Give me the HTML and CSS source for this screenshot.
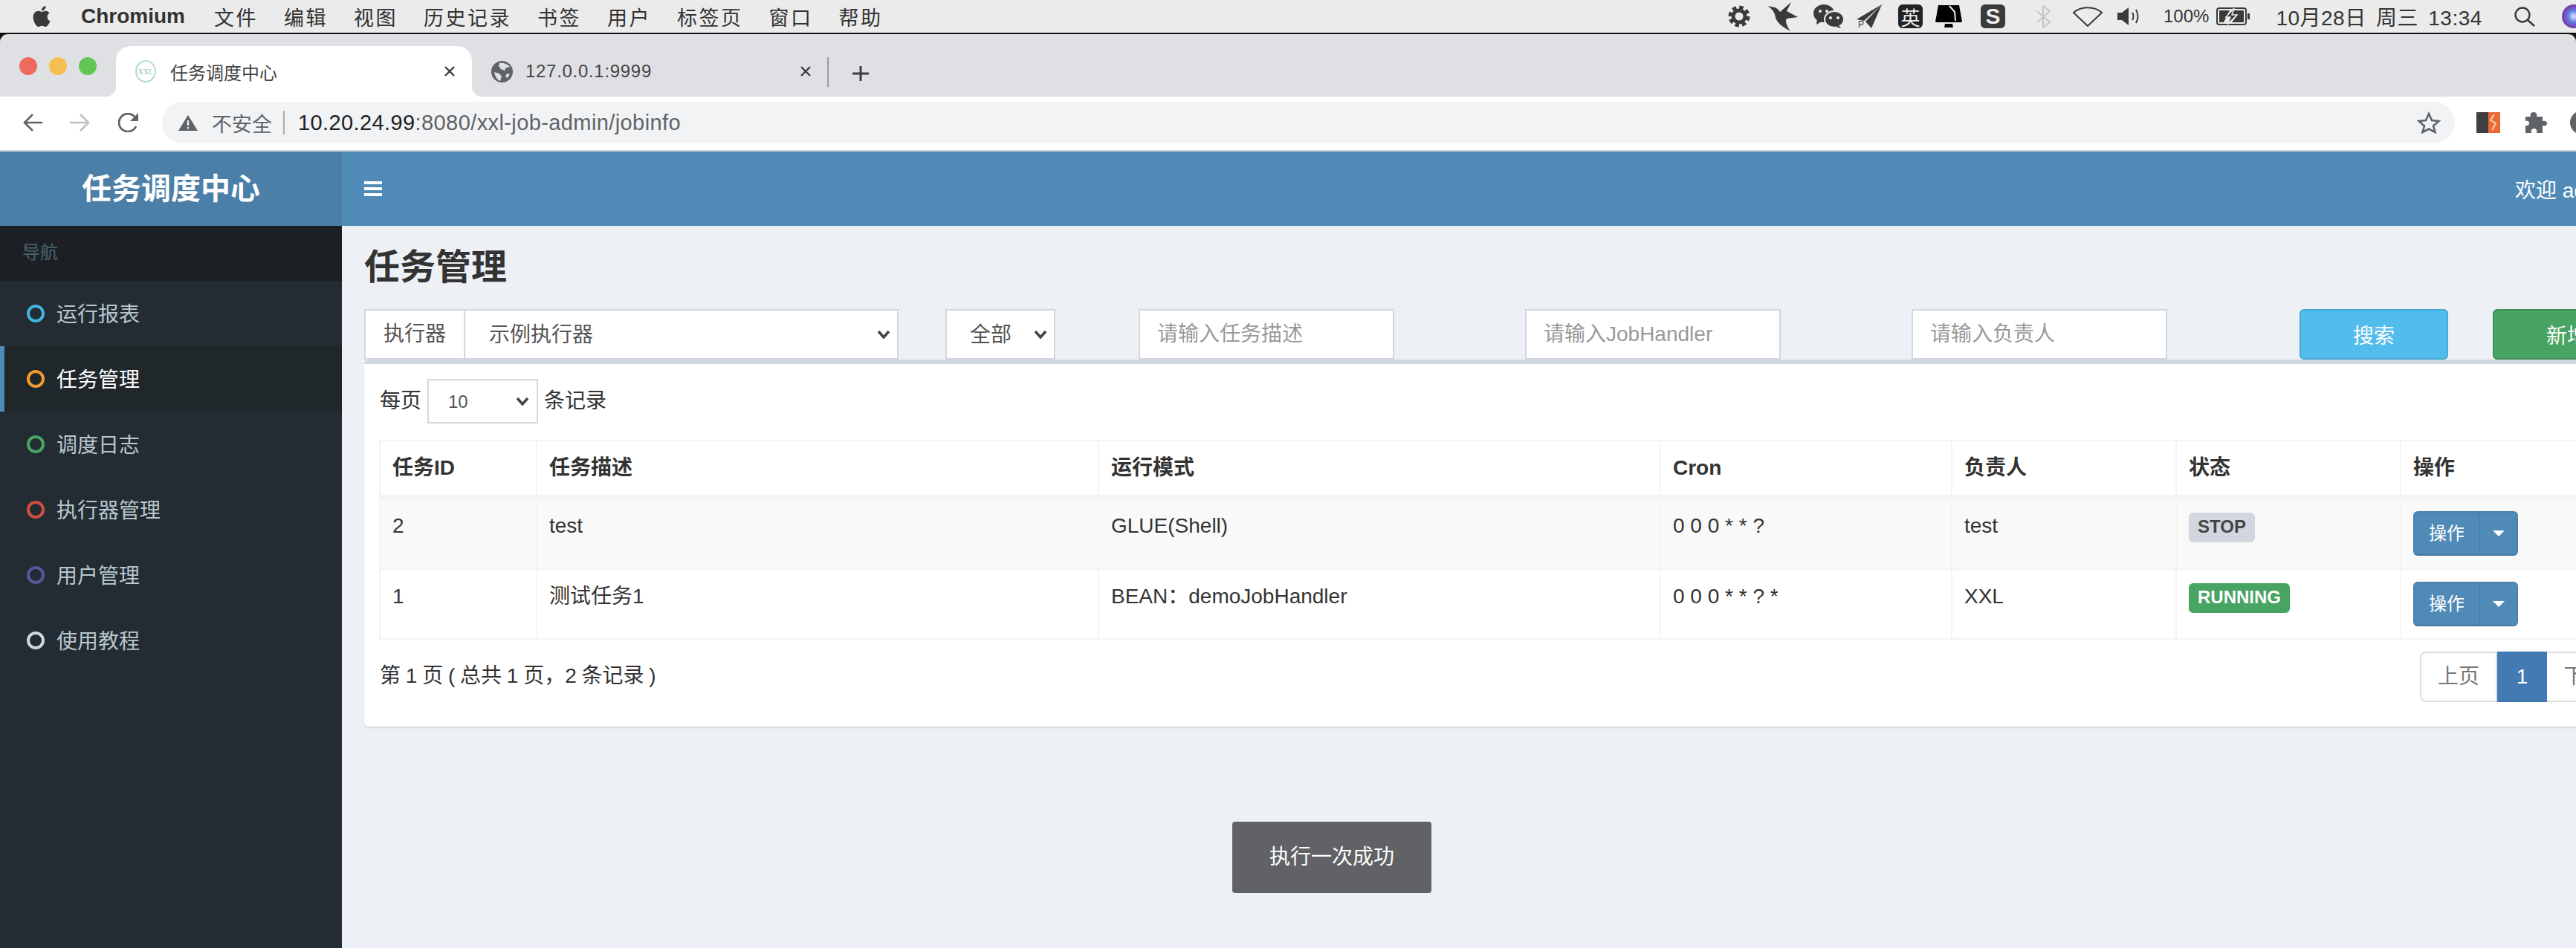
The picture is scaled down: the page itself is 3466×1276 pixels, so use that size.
FILE: index.html
```html
<!DOCTYPE html>
<html lang="zh-CN">
<head>
  <meta charset="UTF-8">
  <title>任务调度中心</title>
  <link rel="stylesheet" href="styles.css">
</head>
<body>
  <div class="menubar">
    <svg class="apple" viewBox="0 0 24 24"><path fill="#3a3a3a" d="M12.152 6.896c-.948 0-2.415-1.078-3.96-1.04-2.04.027-3.91 1.183-4.961 3.014-2.117 3.675-.546 9.103 1.519 12.09 1.013 1.454 2.208 3.09 3.792 3.039 1.52-.065 2.09-.987 3.935-.987 1.831 0 2.35.987 3.96.948 1.637-.026 2.676-1.48 3.676-2.948 1.156-1.688 1.636-3.325 1.662-3.415-.039-.013-3.182-1.221-3.22-4.857-.026-3.04 2.48-4.494 2.597-4.559-1.429-2.09-3.623-2.324-4.39-2.376-2-.156-3.675 1.09-4.61 1.09zM15.53 3.83c.843-1.012 1.4-2.427 1.245-3.83-1.207.052-2.662.805-3.532 1.818-.78.896-1.454 2.338-1.273 3.714 1.338.104 2.715-.688 3.559-1.701"/></svg>
    <b class="app-name">Chromium</b>
    <span>文件</span><span>编辑</span><span>视图</span><span>历史记录</span><span>书签</span><span>用户</span><span>标签页</span><span>窗口</span><span>帮助</span>

    <div class="status">
      <svg class="st-gear" width="30" height="30" viewBox="0 0 30 30"><circle cx="15" cy="15" r="8" fill="none" stroke="#3a3a3a" stroke-width="5"/><circle cx="15" cy="15" r="12" fill="none" stroke="#3a3a3a" stroke-width="5" stroke-dasharray="5.4 4"/></svg>
      <svg class="st-bird" width="43" height="40" viewBox="0 0 43 40"><path fill="#3a3a3a" d="M0 6 L10 8 C13 9 15 11 17 14 L32 1 L26 13 L41 21 L26 23 C24 25 25 32 31 40 C22 35 14 30 11 22 C10 15 7 10 0 6Z"/></svg>
      <svg class="st-wechat" width="41" height="32" viewBox="0 0 41 32"><ellipse cx="14" cy="12" rx="14" ry="12" fill="#3a3a3a"/><path fill="#3a3a3a" d="M5 19 L4 27 L13 22Z"/><ellipse cx="28" cy="20" rx="13" ry="11" fill="#3a3a3a" stroke="#ebebeb" stroke-width="2"/><path fill="#3a3a3a" d="M34 28 L37 32 L30 30Z"/><circle cx="9" cy="9" r="2" fill="#ebebeb"/><circle cx="18" cy="9" r="2" fill="#ebebeb"/><circle cx="23" cy="18" r="2" fill="#ebebeb"/><circle cx="33" cy="18" r="2" fill="#ebebeb"/></svg>
      <svg class="st-plane" width="34" height="32" viewBox="0 0 34 32"><path fill="#3a3a3a" d="M34 0 L0 20 L10 22 Z M34 0 L12 23 L20 32 Z"/><text x="2" y="31" class="plane-p">P</text></svg>
      <span class="st-box st-en">英</span>
      <svg class="st-cup" width="36" height="30" viewBox="0 0 36 30"><path fill="#000" d="M4 0 H32 L36 22 Q36 23 34 23 H2 Q0 23 0 22Z M13 25 H23 L24 30 H12Z"/><path fill="none" stroke="#ebebeb" stroke-width="2" d="M19 1 L26 9 L27 21"/></svg>
      <span class="st-box st-s">S</span>
      <svg class="st-bt" width="19" height="31" viewBox="0 0 19 31"><path fill="none" stroke="#c6c6c6" stroke-width="2" d="M1 8 L18 23 L9 30 V1 L18 8 L1 23"/></svg>
      <svg class="st-wifi" width="42" height="27" viewBox="0 0 42 27"><path fill="none" stroke="#3a3a3a" stroke-width="2" d="M21 26 L2 8 C12 -1 30 -1 40 8Z"/></svg>
      <svg class="st-vol" width="34" height="24" viewBox="0 0 34 24"><path fill="#3a3a3a" d="M0 7 H6 L15 0 V24 L6 17 H0Z"/><path fill="none" stroke="#3a3a3a" stroke-width="2" d="M20 7 Q23 12 20 17 M25 3 Q30 12 25 21"/></svg>
      <span class="st-pct">100%</span>
      <svg class="st-bat" width="45" height="24" viewBox="0 0 45 24"><rect x="1" y="1" width="39" height="22" rx="3" fill="none" stroke="#3a3a3a" stroke-width="2"/><rect x="42" y="8" width="3" height="8" fill="#3a3a3a"/><path fill="#3a3a3a" d="M4 4 H18 L10 20 H4Z M24 4 H37 V20 H21 L28 11 H21Z"/><path fill="#3a3a3a" stroke="#ebebeb" stroke-width="1.5" d="M24 1 L13 13 H19 L15 23 L28 10 H21 Z"/></svg>
      <span class="st-date">10月28日 周三 13:34</span>
      <svg class="st-search" width="30" height="27" viewBox="0 0 30 27"><circle cx="12" cy="11" r="9.5" fill="none" stroke="#3a3a3a" stroke-width="2.4"/><path stroke="#3a3a3a" stroke-width="2.6" d="M19 18 L28 26"/></svg>
      <span class="st-siri"></span>
    </div>
  </div>

  <div class="tabstrip">
    <div class="lights"><i class="red"></i><i class="amber"></i><i class="green"></i></div>
    <div class="tab tab-active">
      <svg class="favicon" width="28" height="30" viewBox="0 0 28 30"><ellipse cx="14" cy="15" rx="13" ry="14" fill="none" stroke="#a3d6bb" stroke-width="1.6"/><text x="14" y="19" class="favicon-text">XXL</text></svg>
      <span class="tab-title">任务调度中心</span>
      <svg class="tab-x" width="16" height="14" viewBox="0 0 16 14"><path stroke="#3d3d3d" stroke-width="2.4" d="M2 1 L14 13 M14 1 L2 13"/></svg>
    </div>
    <div class="tab">
      <svg class="favicon" width="29" height="29" viewBox="0 0 29 29"><circle cx="14.5" cy="14.5" r="14.5" fill="#5f6368"/><path fill="#dfe0e4" d="M11 3 C16 2 22 4 25 8 L20 9 L18 13 L13 11 L10 7Z M4 15 L11 17 L14 21 L12 27 C8 25 5 21 4 15Z M21 17 L25 18 L22 23 L19 21Z"/></svg>
      <span class="tab-title tab-title-ip">127.0.0.1:9999</span>
      <svg class="tab-x" width="16" height="14" viewBox="0 0 16 14"><path stroke="#3d3d3d" stroke-width="2.4" d="M2 1 L14 13 M14 1 L2 13"/></svg>
    </div>
    <span class="tab-sep"></span>
    <svg class="tab-plus" width="22" height="20" viewBox="0 0 22 20"><path stroke="#3d3d3d" stroke-width="3" d="M0 10 H22 M11 0 V20"/></svg>
  </div>

  <div class="toolbar">
    <svg class="tb-back" width="26" height="24" viewBox="0 0 26 24"><path fill="none" stroke="#5f6368" stroke-width="2.6" d="M26 12 H2 M13 1 L2 12 L13 23"/></svg>
    <svg class="tb-forward" width="27" height="24" viewBox="0 0 27 24"><path fill="none" stroke="#bdc0c4" stroke-width="2.6" d="M0 12 H25 M14 1 L25 12 L14 23"/></svg>
    <svg class="tb-reload" width="28" height="26" viewBox="0 0 28 26"><path fill="none" stroke="#5f6368" stroke-width="2.8" d="M24 18 A12 12 0 1 1 22 5"/><path fill="#5f6368" d="M27 0 V11 H16Z"/></svg>
    <div class="addressbar">
      <svg class="warn" width="26" height="21" viewBox="0 0 26 21"><path fill="#5f6368" d="M13 0 L26 21 H0Z"/><path stroke="#f1f3f4" stroke-width="2.4" d="M13 7 V14 M13 16 V18.5"/></svg>
      <span class="insecure">不安全</span>
      <span class="addr-sep"></span>
      <span class="url"><b>10.20.24.99</b>:8080/xxl-job-admin/jobinfo</span>
      <svg class="star" width="32" height="30" viewBox="0 0 32 30"><path fill="none" stroke="#5f6368" stroke-width="2.6" d="M16 3 L20 12 L29.500 13 L22 19.500 L24.500 28 L16 23.500 L7.500 28 L10 19.500 L2.500 13 L12 12Z"/></svg>
    </div>
    <svg class="tb-ext" width="32" height="28" viewBox="0 0 32 28"><rect width="16" height="28" fill="#3f3f41"/><rect x="16" width="16" height="28" fill="#ea6a35"/><path fill="none" stroke="#f7d3c1" stroke-width="2" d="M24 3 L19 11 L26 15 L21 24"/></svg>
    <svg class="tb-puzzle" width="29" height="28" viewBox="0 0 29 28"><path fill="#5f6368" d="M11 0 C15 0 16 3 15 6 H23 V12 C27 11 29 13 29 15 C29 18 26 19 23 18 V28 H15 C16 24 14 22 12 22 C9 22 7 24 8 28 H0 V18 C3 19 5 17 5 15 C5 12 3 11 0 12 V6 H7 C6 3 7 0 11 0Z"/></svg>
    <span class="tb-avatar"></span>
  </div>

  <div class="app">
    <aside class="sidebar">
      <div class="logo">任务调度中心</div>
      <div class="nav-header">导航</div>
      <a class="nav-item"><i class="ring ring-aqua"></i><span>运行报表</span></a>
      <a class="nav-item nav-active"><i class="ring ring-orange"></i><span>任务管理</span></a>
      <a class="nav-item"><i class="ring ring-green"></i><span>调度日志</span></a>
      <a class="nav-item"><i class="ring ring-red"></i><span>执行器管理</span></a>
      <a class="nav-item"><i class="ring ring-purple"></i><span>用户管理</span></a>
      <a class="nav-item"><i class="ring ring-gray"></i><span>使用教程</span></a>
    </aside>

    <main class="page">
      <header class="navbar">
        <div class="burger"><i></i><i></i><i></i></div>
        <span class="welcome">欢迎 admin</span>
      </header>

      <h1 class="page-title">任务管理</h1>

      <div class="filters">
        <div class="input-group">
          <span class="addon">执行器</span>
          <select class="field field-group"><option>示例执行器</option></select>
        </div>
        <select class="field field-status"><option>全部</option></select>
        <input class="field field-text field-first" placeholder="请输入任务描述">
        <input class="field field-text field-next" placeholder="请输入JobHandler">
        <input class="field field-text field-next" placeholder="请输入负责人">
        <button class="btn btn-search">搜索</button>
        <button class="btn btn-add">新增</button>
      </div>

      <section class="box">
        <div class="page-size">
          <span>每页</span>
          <select class="field-size"><option>10</option></select>
          <span>条记录</span>
        </div>

        <table class="jobs">
          <colgroup>
            <col class="c-id"><col class="c-desc"><col class="c-desc"><col class="c-cron"><col class="c-sm"><col class="c-sm"><col class="c-sm">
          </colgroup>
          <thead>
            <tr><th>任务ID</th><th>任务描述</th><th>运行模式</th><th>Cron</th><th>负责人</th><th>状态</th><th>操作</th></tr>
          </thead>
          <tbody>
            <tr class="row-odd">
              <td>2</td><td>test</td><td>GLUE(Shell)</td><td>0 0 0 * * ?</td><td>test</td>
              <td><span class="label label-stop">STOP</span></td>
              <td><div class="op"><span class="op-main">操作</span><span class="op-caret"><i></i></span></div></td>
            </tr>
            <tr class="row-even">
              <td>1</td><td>测试任务1</td><td>BEAN：demoJobHandler</td><td>0 0 0 * * ? *</td><td>XXL</td>
              <td><span class="label label-run">RUNNING</span></td>
              <td><div class="op"><span class="op-main">操作</span><span class="op-caret"><i></i></span></div></td>
            </tr>
          </tbody>
        </table>

        <div class="table-foot">
          <span class="info">第 1 页 ( 总共 1 页，2 条记录 )</span>
          <div class="pager">
            <a class="pg pg-prev">上页</a><a class="pg pg-cur">1</a><a class="pg pg-next">下页</a>
          </div>
        </div>
      </section>
    </main>
  </div>

  <div class="toast">执行一次成功</div>
</body>
</html>
```
FILE: styles.css
```css
* {
  box-sizing: border-box;
}

html, body {
  margin: 0;
  height: 1276px;
  overflow: hidden;
}

body {
  position: relative;
  width: 3466px;
  background: #111;
  font-family: "Liberation Sans", "Noto Sans CJK SC", sans-serif;
  font-size: 28px;
  color: #333;
}

/* mac menu bar */
.menubar {
  display: flex;
  align-items: center;
  gap: 35px;
  height: 44px;
  margin-bottom: 2px;
  padding-left: 42px;
  background: #ebebeb;
  color: #333;
  font-size: 27px;
  white-space: nowrap;
  overflow: hidden;
}

.menubar > span {
  flex: none;
  letter-spacing: 2.5px;
}

.apple {
  flex: none;
  width: 28px;
  height: 30px;
  margin-right: 4px;
}

.app-name {
  flex: none;
  margin-right: 4px;
  font-size: 28px;
}

.status {
  display: flex;
  align-items: center;
  flex: none;
  width: 1141px;
  height: 44px;
  margin-left: auto;
}

.status svg, .status span {
  flex: none;
}

.st-bird { margin-left: 23px; }
.st-wechat { margin-left: 19px; }
.st-plane { margin-left: 17px; }
.st-en { margin-left: 22px; }
.st-cup { margin-left: 17px; }
.st-s { margin-left: 25px; }
.st-bt { margin-left: 42px; }
.st-wifi { margin-left: 29px; }
.st-vol { margin-left: 19px; }
.st-pct { margin-left: 28px; font-size: 24px; }
.st-bat { margin-left: 10px; }
.st-date { margin-left: 35px; font-size: 28px; letter-spacing: .5px; word-spacing: 5px; }
.st-search { margin-left: 42px; }

.st-box {
  display: flex;
  align-items: center;
  justify-content: center;
  width: 33px;
  height: 32px;
  border-radius: 6px;
  background: #222;
  color: #eee;
  font-size: 26px;
}

.st-s {
  background: #3a3a3a;
  font-weight: bold;
  font-size: 30px;
}

.st-siri {
  width: 32px;
  height: 32px;
  margin-left: 35px;
  border-radius: 50%;
  background: radial-gradient(circle at 50% 50%, #e8e8ff 0, #5c7ce0 35%, #7a3fa8 65%, #23235a 100%);
}

.plane-p {
  font-size: 12px;
  fill: #3a3a3a;
}

/* browser chrome */
.tabstrip {
  display: flex;
  align-items: flex-end;
  height: 84px;
  border-top: 2px solid #e6e6e9;
  border-radius: 10px 10px 0 0;
  background: #dfe0e4;
}

.lights {
  display: flex;
  align-self: flex-start;
  gap: 16px;
  width: 156px;
  padding: 29px 0 0 26px;
}

.lights i {
  width: 24px;
  height: 24px;
  border-radius: 50%;
}

.red { background: #ee6a5e; }
.amber { background: #f6be4f; }
.green { background: #62c554; }

.tab {
  position: relative;
  display: flex;
  align-items: center;
  width: 479px;
  height: 68px;
  padding: 0 22px 0 26px;
  border-radius: 20px 20px 0 0;
  font-size: 24px;
  color: #444;
}

.tab-active {
  background: #fff;
}

.tab-active::before,
.tab-active::after {
  content: "";
  position: absolute;
  bottom: 0;
  width: 14px;
  height: 14px;
}

.tab-active::before {
  left: -14px;
  background: radial-gradient(circle at 0 0, transparent 14px, #fff 14.5px);
}

.tab-active::after {
  right: -14px;
  background: radial-gradient(circle at 100% 0, transparent 14px, #fff 14.5px);
}

.tab-title {
  margin-left: 19px;
}

.tab-title-ip {
  margin-left: 17px;
  letter-spacing: .7px;
}

.tab-x {
  margin-left: auto;
}

.favicon-text {
  font-family: "Liberation Serif", serif;
  font-size: 10px;
  text-anchor: middle;
  fill: #8ec9a8;
}

.tab-sep {
  align-self: flex-start;
  width: 2px;
  height: 40px;
  margin-top: 29px;
  margin-left: -1px;
  background: #9a9ca0;
}

.tab-plus {
  align-self: flex-start;
  margin: 41px 0 0 32px;
}

.toolbar {
  display: flex;
  align-items: center;
  height: 74px;
  padding-bottom: 2px;
  padding-left: 31px;
  border-bottom: 2px solid #cdd0d4;
  background: #fff;
  overflow: hidden;
}

.toolbar > svg {
  flex: none;
}

.tb-forward { margin-left: 37px; }
.tb-reload { margin-left: 38px; }

.addressbar {
  display: flex;
  align-items: center;
  flex: none;
  width: 3085px;
  height: 56px;
  margin-left: 31px;
  padding: 0 19px 0 22px;
  border-radius: 28px;
  background: #f1f3f4;
  color: #5f6368;
}

.insecure {
  margin-left: 19px;
  font-size: 27px;
}

.addr-sep {
  width: 2px;
  height: 32px;
  margin: 0 18px 0 15px;
  background: #a9abae;
}

.url {
  font-size: 29px;
  letter-spacing: .4px;
}

.url b {
  font-weight: normal;
  color: #202124;
}

.star {
  margin-left: auto;
}

.tb-ext { margin-left: 29px; }
.tb-puzzle { margin-left: 34px; }

.tb-avatar {
  flex: none;
  width: 32px;
  height: 32px;
  margin-left: 31px;
  border-radius: 50%;
  background: #5f6368;
}

/* page */
.app {
  display: flex;
  height: 1072px;
  background: #edf0f5;
  overflow: hidden;
}

.sidebar {
  flex: none;
  width: 460px;
  background: #242c33;
}

.logo {
  height: 100px;
  background: #4b7fa8;
  color: #fff;
  font-size: 40px;
  font-weight: bold;
  line-height: 100px;
  text-align: center;
}

.nav-header {
  height: 74px;
  padding-left: 30px;
  background: #1c2024;
  color: #4b646f;
  font-size: 24px;
  line-height: 72px;
}

.nav-item {
  display: flex;
  align-items: center;
  height: 88px;
  padding-left: 30px;
  border-left: 6px solid transparent;
  color: #b8c7ce;
}

.nav-item span {
  margin-top: -3px;
}

.nav-active {
  border-left-color: #508bb8;
  background: #1f272b;
  color: #fff;
}

.ring {
  flex: none;
  width: 24px;
  height: 24px;
  margin-right: 16px;
  border: 4px solid;
  border-radius: 50%;
}

.ring-aqua { border-color: #43b3e0; }
.ring-orange { border-color: #f09c2e; }
.ring-green { border-color: #4aa565; }
.ring-red { border-color: #d0503f; }
.ring-purple { border-color: #5a559f; }
.ring-gray { border-color: #d2d6de; }

.page {
  flex: none;
  width: 3120px;
}

.navbar {
  display: flex;
  align-items: center;
  justify-content: space-between;
  height: 100px;
  padding: 0 56px 0 30px;
  background: #508bb8;
  color: #fff;
}

.burger {
  display: flex;
  flex-direction: column;
  gap: 4px;
  width: 24px;
}

.burger i {
  height: 4px;
  background: #fff;
}

.page-title {
  height: 112px;
  margin: 0;
  padding: 32px 0 0 30px;
  font-size: 48px;
  font-weight: 600;
  line-height: 48px;
  color: #333;
}

.filters {
  display: flex;
  height: 68px;
  padding-left: 30px;
}

.input-group {
  display: flex;
  flex: none;
  width: 719px;
}

.addon {
  flex: none;
  width: 136px;
  height: 68px;
  border: 2px solid #d2d6de;
  background: #fff;
  color: #555;
  line-height: 64px;
  text-align: center;
}

.field {
  flex: none;
  height: 68px;
  border: 2px solid #d2d6de;
  border-radius: 0;
  outline: none;
  background-color: #fff;
  color: #555;
  font: inherit;
}

select.field,
.field-size {
  appearance: none;
  background-image: url("data:image/svg+xml,%3Csvg xmlns='http://www.w3.org/2000/svg' width='18' height='12'%3E%3Cpath fill='none' stroke='%23444' stroke-width='3.500' d='M2 2l7 8 7-8'/%3E%3C/svg%3E");
  background-repeat: no-repeat;
}

.field-group {
  width: 585px;
  margin-left: -2px;
  padding-left: 32px;
  background-position: right 9px center;
}

.field-status {
  width: 148px;
  margin-left: 63px;
  padding-left: 31px;
  background-position: right 9px center;
}

.field-text {
  width: 344px;
  padding: 0 23px;
}

.field-text::placeholder {
  color: #999;
}

.field-first { margin-left: 112px; }
.field-next { margin-left: 176px; }

.btn {
  flex: none;
  width: 200px;
  height: 68px;
  border: 2px solid;
  border-radius: 6px;
  color: #fff;
  font: inherit;
}

.btn-search {
  margin-left: 178px;
  border-color: #46a8d4;
  background: #52bcec;
}

.btn-add {
  margin-left: 60px;
  border-color: #3f8f55;
  background: #48a462;
}

.box {
  width: 3060px;
  height: 494px;
  margin-left: 30px;
  padding: 20px;
  border-top: 6px solid #d2d6de;
  border-radius: 6px;
  background: #fff;
  box-shadow: 0 2px 2px rgba(0, 0, 0, .1);
}

.page-size {
  display: flex;
  align-items: center;
  gap: 8px;
  height: 60px;
  margin-bottom: 22px;
  padding-left: 1px;
}

.page-size span {
  margin-top: -6px;
}

.field-size {
  flex: none;
  width: 149px;
  height: 60px;
  padding-left: 26px;
  border: 2px solid #d2d6de;
  border-radius: 0;
  background-color: #fff;
  background-position: right 10px center;
  color: #555;
  font-family: inherit;
  font-size: 24px;
}

.jobs {
  width: 3021px;
  border-collapse: collapse;
  table-layout: fixed;
}

.c-id { width: 211px; }
.c-desc { width: 756px; }
.c-cron { width: 392px; }
.c-sm { width: 302px; }

.jobs th,
.jobs td {
  padding: 16px;
  border: 2px solid #f4f4f4;
  line-height: 40px;
  text-align: left;
  vertical-align: top;
}

.jobs th {
  height: 76px;
  padding-top: 16px;
  border-bottom-width: 6px;
  font-weight: bold;
}

.row-odd td {
  height: 97px;
  background: #f9f9f9;
}

.row-even td {
  height: 93px;
}

.label {
  display: inline-block;
  height: 40px;
  margin-top: 2px;
  padding: 0 12px;
  border-radius: 6px;
  font-size: 24px;
  font-weight: bold;
  line-height: 38px;
  vertical-align: top;
}

.label-stop {
  background: #d2d6de;
  color: #444;
}

.label-run {
  background: #48a462;
  color: #fff;
}

.op {
  display: flex;
  width: 141px;
  height: 60px;
  border: 2px solid #4a80aa;
  border-bottom-color: #43759c;
  border-radius: 6px;
  background: #508bb8;
  color: #fff;
  font-size: 24px;
  line-height: 56px;
}

.op-main {
  width: 88px;
  border-right: 2px solid #4a80aa;
  text-align: center;
}

.op-caret {
  display: flex;
  flex: 1;
  align-items: center;
  justify-content: center;
}

.op-caret i {
  width: 0;
  height: 0;
  border-top: 8px solid #fff;
  border-left: 8px solid transparent;
  border-right: 8px solid transparent;
}

.table-foot {
  display: flex;
  align-items: flex-start;
  justify-content: space-between;
  margin-top: 16px;
}

.info {
  margin-top: 10px;
  padding-left: 1px;
  word-spacing: -1px;
}

.pager {
  display: flex;
  height: 68px;
  font-size: 28px;
  line-height: 64px;
}

.pg {
  height: 68px;
  border: 2px solid #ddd;
  background: #fff;
  color: #777;
  text-align: center;
}

.pg-prev {
  width: 104px;
  border-radius: 8px 0 0 8px;
}

.pg-cur {
  width: 67px;
  border-color: #447ab4;
  background: #447ab4;
  color: #fff;
}

.pg-next {
  width: 103px;
  border-left: 0;
  border-radius: 0 8px 8px 0;
}

/* layer message floats above the page */
.toast {
  position: absolute;
  left: 1658px;
  top: 1106px;
  width: 268px;
  height: 96px;
  border-radius: 4px;
  background: #616265;
  color: #fff;
  line-height: 96px;
  text-align: center;
}
```
